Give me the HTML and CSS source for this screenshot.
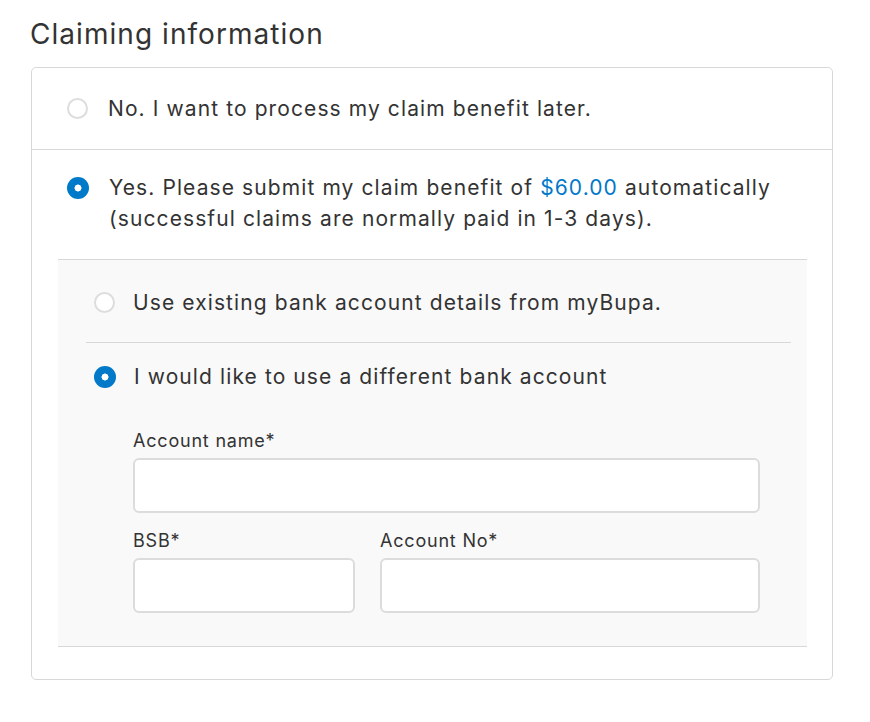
FILE: index.html
```html
<!DOCTYPE html>
<html lang="en">
<head>
<meta charset="utf-8">
<title>Claiming information</title>
<link rel="stylesheet" href="styles.css">
</head>
<body>
<main class="page">
  <h2 class="title">Claiming information</h2>
  <section class="card">
    <div class="option option-first">
      <span class="radio"></span>
      <span class="option-text">No. I want to process my claim benefit later.</span>
    </div>
    <div class="option option-second">
      <span class="radio radio-checked"></span>
      <span class="option-text">Yes. Please submit my claim benefit of <span class="amount">$60.00</span> automatically (successful claims are normally paid in 1-3 days).</span>
    </div>
    <div class="panel">
      <div class="sub-option sub-first">
        <span class="radio"></span>
        <span class="option-text">Use existing bank account details from myBupa.</span>
      </div>
      <div class="sub-option sub-second">
        <span class="radio radio-checked"></span>
        <span class="option-text">I would like to use a different bank account</span>
      </div>
      <div class="fields">
        <label class="field field-full">
          <span class="label">Account name*</span>
          <span class="input"></span>
        </label>
        <div class="field-row">
          <label class="field">
            <span class="label">BSB*</span>
            <span class="input"></span>
          </label>
          <label class="field">
            <span class="label">Account No*</span>
            <span class="input"></span>
          </label>
        </div>
      </div>
    </div>
  </section>
</main>
</body>
</html>
```

FILE: styles.css
```css
* { box-sizing: border-box; }
html, body { margin: 0; padding: 0; background: #ffffff; }
body {
  font-family: Inter, "Open Sans", "Liberation Sans", sans-serif;
  color: #333333;
}
.page {
  padding: 14px 38px 0 30px;
}
.title {
  margin: 0;
  font-size: 28px;
  font-weight: 400;
  line-height: 40px;
  letter-spacing: 1.05px;
  color: #333333;
}
.card {
  margin-top: 13px;
  margin-left: 1px;
  width: 802px;
  border: 1px solid #d8d8d8;
  border-radius: 5px;
  padding-bottom: 32px;
}
.option {
  display: flex;
  align-items: flex-start;
  padding-left: 35px;
  padding-right: 30px;
}
.option-first {
  height: 82px;
  align-items: center;
  border-bottom: 1px solid #d8d8d8;
}
.option-second {
  padding-top: 22px;
  padding-bottom: 25px;
}
.option-text {
  font-size: 21px;
  line-height: 31px;
  letter-spacing: 1.1px;
}
.radio {
  flex: none;
  width: 21px;
  height: 21px;
  border-radius: 50%;
  border: 2px solid #dddddd;
  background: #ffffff;
  margin-right: 20px;
}
.option-second .radio,
.sub-second .radio { margin-top: 5px; }
.radio-checked {
  border: none;
  background: radial-gradient(circle, #ffffff 0 3.2px, #0079c8 3.8px);
  width: 22px;
  height: 22px;
}
.amount { color: #0079c8; }
.panel {
  margin: 0 25px 0 26px;
  background: #f9f9f9;
  border-top: 1px solid #d8d8d8;
  border-bottom: 1px solid #d8d8d8;
  padding: 0 16px 33px 28px;
}
.sub-option {
  display: flex;
  padding-left: 8px;
}
.sub-option .radio { margin-right: 18px; }
.sub-first {
  height: 83px;
  padding-top: 3px;
  align-items: center;
  border-bottom: 1px solid #d8d8d8;
}
.sub-second {
  align-items: flex-start;
  padding-top: 18px;
}
.fields {
  padding-left: 47px;
  padding-right: 31px;
  padding-top: 36px;
}
.field {
  display: flex;
  flex-direction: column;
}
.label {
  font-size: 18px;
  line-height: 26px;
  letter-spacing: 0.8px;
  margin-bottom: 4px;
}
.input {
  display: block;
  height: 55px;
  background: #ffffff;
  border: 2px solid #dcdcdc;
  border-radius: 6px;
}
.field-row {
  display: grid;
  grid-template-columns: 222px 1fr;
  column-gap: 25px;
  margin-top: 15px;
}
```
